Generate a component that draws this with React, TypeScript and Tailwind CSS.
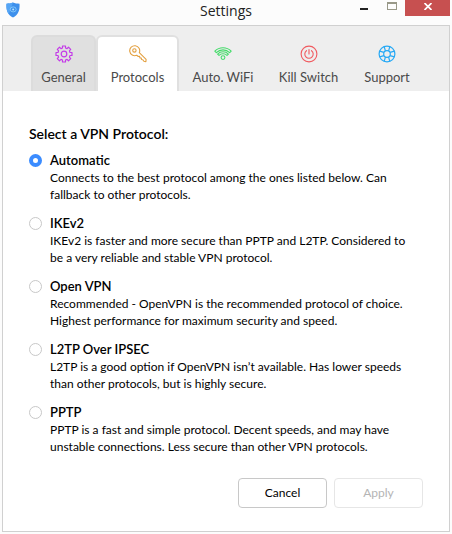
import { useState, type ReactNode } from "react";

function GearIcon() {
  return (
    <svg viewBox="0 0 18 18" className="size-[18px]" fill="none" stroke="#c43be8" strokeWidth="1.2" strokeLinejoin="round" aria-hidden="true">
      <path d="M7.500 1h3v2l1.500.600 1.500-1.400 2.200 2.200-1.300 1.500.6 1.600h2v3h-2l-.6 1.600 1.300 1.500-2.200 2.200-1.500-1.400-1.500.600v2h-3v-2L6 14.400l-1.500 1.400-2.200-2.200 1.300-1.500L3 10.500H1v-3h2l.6-1.600-1.300-1.500 2.200-2.200L6 3.600 7.500 3z" />
      <circle cx="9" cy="9" r="2.800" />
    </svg>
  );
}

function KeyIcon() {
  return (
    <svg viewBox="0 0 18 18" className="size-[18px]" fill="none" stroke="#e3a040" strokeWidth="1.100" strokeLinejoin="round" aria-hidden="true">
      <path d="M10.300 7.700A5 5 0 1 0 7.700 10.300l1.600 1.200 1.300-.1.300 1.500 1.400.1.200 1.500 1.300.2 1.100 1.600 2 .4.200-2.300z" />
      <circle cx="5.400" cy="5.400" r="1.700" />
    </svg>
  );
}

function WifiIcon() {
  return (
    <svg viewBox="0 0 18 18" className="size-[18px]" fill="none" stroke="#43db69" strokeWidth="1.100" strokeLinejoin="round" aria-hidden="true">
      <path d="M.8 6.200C5.300 1.600 12.700 1.600 17.200 6.200L15.700 7.600C11.900 4 6.100 4 2.300 7.600z" />
      <path d="M3.600 9.100C6.600 6 11.400 6 14.400 9.100L13 10.400C10.800 8.200 7.200 8.200 5 10.400z" />
      <circle cx="9" cy="12.600" r="1.900" />
    </svg>
  );
}

function PowerIcon() {
  return (
    <svg viewBox="0 0 18 18" className="size-[18px]" fill="none" stroke="#f05a5f" strokeWidth="1.100" strokeLinecap="round" aria-hidden="true">
      <circle cx="9" cy="9" r="7.900" />
      <path d="M9 4.500v4.500M6.500 5.700a4.200 4.200 0 1 0 5 0" />
    </svg>
  );
}

function SupportIcon() {
  return (
    <svg viewBox="0 0 18 18" className="size-[18px]" fill="none" stroke="#27a9f5" strokeWidth="1.200" aria-hidden="true">
      <circle cx="9" cy="9" r="7.900" />
      <circle cx="9" cy="9" r="3.300" />
      <path d="M6.200 1.700l1.200 4.200M11.800 1.700l-1.200 4.200M6.200 16.300l1.200-4.200M11.800 16.300l-1.200-4.200M1.700 6.200l4.200 1.200M1.700 11.800l4.200-1.200M16.300 6.200l-4.200 1.200M16.300 11.800l-4.200-1.200" />
    </svg>
  );
}

function ShieldLogo() {
  return (
    <svg viewBox="0 0 14 16" className="h-4 w-[14px]" aria-hidden="true">
      <path d="M7 .5c2 .8 4 1.200 6.500 1.200.5 6.500-1.200 11.200-6.500 13.800C1.700 12.900 0 8.200.5 1.700 3 1.700 5 1.300 7 .5z" fill="#3d90ec" />
      <path d="M7 .5C5 1.300 3 1.700.5 1.700.2 6 .8 9.800 2.800 12.300z" fill="#55a5f5" />
      <ellipse cx="7.200" cy="7.400" rx="3" ry="2.500" fill="none" stroke="#8fd2fb" strokeWidth=".8" />
      <circle cx="7.200" cy="7.400" r="1" fill="#b5e5ff" />
    </svg>
  );
}

interface Tab {
  label: string;
  icon: ReactNode;
  className: string;
}

const tabs: Tab[] = [
  { label: "General", icon: <GearIcon />, className: "w-[65px] rounded-t-md border-2 border-b-0 border-[#dcdcdc] bg-[#e0e0e0]" },
  { label: "Protocols", icon: <KeyIcon />, className: "w-[83px] rounded-t-md border-2 border-b-0 border-[#e0e0e0] bg-white" },
  { label: "Auto. WiFi", icon: <WifiIcon />, className: "w-[88px] border-t-2 border-transparent" },
  { label: "Kill Switch", icon: <PowerIcon />, className: "w-[83px] border-t-2 border-transparent" },
  { label: "Support", icon: <SupportIcon />, className: "w-[74px] border-t-2 border-transparent" },
];

const protocols = [
  { id: "automatic", name: "Automatic", text: "Connects to the best protocol among the ones listed below. Can fallback to other protocols." },
  { id: "ikev2", name: "IKEv2", text: "IKEv2 is faster and more secure than PPTP and L2TP. Considered to be a very reliable and stable VPN protocol." },
  { id: "openvpn", name: "Open VPN", text: "Recommended - OpenVPN is the recommended protocol of choice. Highest performance for maximum security and speed." },
  { id: "l2tp", name: "L2TP Over IPSEC", text: "L2TP is a good option if OpenVPN isn’t available. Has lower speeds than other protocols, but is highly secure." },
  { id: "pptp", name: "PPTP", text: "PPTP is a fast and simple protocol. Decent speeds, and may have unstable connections. Less secure than other VPN protocols." },
];

export default function App() {
  const [selected, setSelected] = useState("automatic");

  return (
    <div className="bg-[#fcfcfc] px-[2px] pb-[2px] font-['Lato',sans-serif] text-black">
      <header className="grid h-[25px] grid-cols-[1fr_auto_1fr] items-start">
        <div className="pt-[2px] pl-1">
          <ShieldLogo />
        </div>
        <h1 className="font-['Open_Sans',sans-serif] text-sm leading-[22px] text-[#222]">Settings</h1>
        <div className="flex justify-end">
          <button type="button" aria-label="Minimize" className="flex h-4 w-[30px] items-start justify-center pt-2">
            <span className="h-[2px] w-2 bg-[#222]" />
          </button>
          <button type="button" aria-label="Maximize" className="flex h-4 w-[26px] items-start justify-center pt-[2px]">
            <span className="h-2 w-[10px] border border-t-2 border-[#989888]" />
          </button>
          <button type="button" aria-label="Close" className="flex h-4 w-[45px] items-start justify-center bg-[#c75050] pt-[3px]">
            <svg viewBox="0 0 8 7" className="h-[7px] w-2" stroke="white" strokeWidth="1.700" aria-hidden="true">
              <path d="M.5 0l7 7M7.500 0l-7 7" />
            </svg>
          </button>
        </div>
      </header>

      <main className="border border-[#d0d0d0] bg-white">
        <nav role="tablist" className="flex h-[65px] items-end bg-[#eeeeee] pl-7">
          {tabs.map((tab) => (
            <button
              key={tab.label}
              type="button"
              role="tab"
              aria-selected={tab.label === "Protocols"}
              className={`flex h-14 shrink-0 flex-col items-center gap-[5px] pt-2 text-[13px] leading-[18px] text-[#4a4a4a] ${tab.className}`}
            >
              {tab.icon}
              <span className="whitespace-nowrap">{tab.label}</span>
            </button>
          ))}
        </nav>

        <form className="px-[26px] pt-8 pb-[23px]" onSubmit={(event) => event.preventDefault()}>
          <fieldset>
            <legend className="text-sm leading-[22px] font-semibold">Select a VPN Protocol:</legend>
            <div className="flex flex-col gap-3 pt-[7px] pr-3">
              {protocols.map((protocol) => (
                <div key={protocol.id} className="flex gap-2">
                  <input
                    type="radio"
                    name="protocol"
                    id={protocol.id}
                    checked={selected === protocol.id}
                    onChange={() => setSelected(protocol.id)}
                    className="mt-[2px] size-[13px] shrink-0 appearance-none rounded-full border border-[#c8c8c8] bg-white checked:border-4 checked:border-[#3b8cff]"
                  />
                  <div className="flex-1">
                    <label htmlFor={protocol.id} className="block text-[13px] leading-[17px] font-semibold">
                      {protocol.name}
                    </label>
                    <p className="text-xs leading-[17px]">{protocol.text}</p>
                  </div>
                </div>
              ))}
            </div>
          </fieldset>
          <div className="flex justify-end gap-[7px] pt-[23px]">
            <button type="button" className="h-[30px] w-[89px] rounded border border-[#c8c8c8] text-xs">
              Cancel
            </button>
            <button type="submit" disabled className="h-[30px] w-[89px] rounded border border-[#e6e6e6] text-xs text-[#b4b4b4]">
              Apply
            </button>
          </div>
        </form>
      </main>
    </div>
  );
}
